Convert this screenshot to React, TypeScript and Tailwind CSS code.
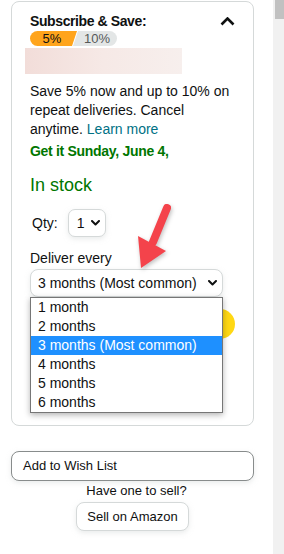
import { useState } from 'react';

const FREQS = ['1 month', '2 months', '3 months (Most common)', '4 months', '5 months', '6 months'];

function Chevron({ className = '' }: { className?: string }) {
  return (
    <svg width="9" height="6" viewBox="0 0 9 6" className={className}>
      <path d="M1 1 L4.5 4.5 L8 1" fill="none" stroke="#0f1111" strokeWidth="2" strokeLinecap="round" strokeLinejoin="round" />
    </svg>
  );
}

export default function App() {
  const [freq] = useState(2);

  return (
    <div className="flex w-[284px] h-[554px] bg-white overflow-hidden font-['Liberation_Sans',Arial,sans-serif] text-[#0f1111]">
      <div className="relative w-[273px] pl-[11px] pr-[19px]">
        {/* Subscribe card */}
        <div className="mt-px rounded-lg border border-[#d5d9d9] pt-[10px] px-[18px] pb-[18px]">
          <div className="flex items-center justify-between">
            <h3 className="text-[14px] font-bold leading-[19px] tracking-[-0.4px]">Subscribe &amp; Save:</h3>
            <svg width="15" height="9" viewBox="0 0 15 9">
              <path d="M1.5 7.5 L7.5 1.5 L13.5 7.5" fill="none" stroke="#0f1111" strokeWidth="2.6" />
            </svg>
          </div>

          <div className="flex h-[15px] w-[87px] rounded-full overflow-hidden text-[13px] leading-[15px]">
            <div className="w-[47px] bg-[#ffa41c] pr-[3px] text-center [clip-path:polygon(0_0,100%_0,calc(100%_-_5px)_100%,0_100%)]">5%</div>
            <div className="-ml-[4px] flex-1 bg-[#e3e6e6] pl-[4px] text-center text-[#565959] [clip-path:polygon(5px_0,100%_0,100%_100%,0_100%)]">10%</div>
          </div>

          <div className="mt-[2px] -ml-[5px] w-[157px] h-[26px] bg-linear-to-r from-[#f2ddd9] via-[#f6e9e6] to-[#f7efed]" />

          <p className="mt-[8px] text-[14px] leading-[19px]">
            Save 5% now and up to 10% on repeat deliveries. Cancel anytime. <span className="text-[#007185]">Learn more</span>
          </p>
          <p className="mt-[3px] text-[14px] leading-[19px] font-bold text-[#007600] tracking-[-0.3px]">Get it Sunday, June 4,</p>

          <p className="mt-[12px] text-[18px] leading-[24px] text-[#007600]">In stock</p>

          <div className="mt-[12px] flex items-center pl-[2px] text-[14px] leading-[19px]">
            <span>Qty:</span>
            <div className="ml-[10px] flex h-[28px] w-[38px] items-center justify-between rounded-[7px] border border-[#d5d9d9] bg-white pl-[8px] pr-[5px] shadow-[0_2px_5px_rgba(213,217,217,0.5)]">
              <span>1</span>
              <Chevron />
            </div>
          </div>

          <p className="mt-[12px] text-[14px] leading-[19px]">Deliver every</p>

          <div className="relative mt-px w-[193px]">
            <div className="flex h-[28px] items-center justify-between rounded-lg border border-[#d5d9d9] bg-white pl-[7px] pr-[5px] text-[14px] shadow-[0_2px_5px_rgba(213,217,217,0.5)]">
              <span>{FREQS[freq]}</span>
              <Chevron />
            </div>
            {/* Open option list */}
            <ul className="absolute left-0 top-full z-10 w-[193px] border border-[#767676] bg-white text-[14px] leading-[19px] shadow-[0_2px_6px_rgba(0,0,0,0.3)]">
              {FREQS.map((f, i) => (
                <li key={f} className={`h-[19px] px-[7px] ${i === freq ? 'bg-[#1e90ff] text-white' : ''}`}>
                  {f}
                </li>
              ))}
            </ul>
          </div>

          <button className="mt-[12px] mb-[68px] flex h-[30px] w-full items-center justify-center rounded-full bg-[#ffd814] text-[13px]">
            Subscribe Now
          </button>
        </div>

        <button className="mt-[25px] flex h-[30px] w-full items-center rounded-lg border border-[#888c8c] bg-white px-[11px] text-[13px] shadow-[0_2px_5px_rgba(213,217,217,0.5)]">
          Add to Wish List
        </button>

        <div className="mt-[2px] flex flex-col items-center">
          <p className="text-[13px] leading-[16px] pl-[8px]">Have one to sell?</p>
          <button className="mt-[3px] h-[29px] rounded-lg border border-[#d5d9d9] bg-white px-[10px] text-[13px] shadow-[0_2px_5px_rgba(213,217,217,0.5)]">
            Sell on Amazon
          </button>
        </div>

        {/* Annotation arrow */}
        <svg
          className="pointer-events-none absolute left-[130px] top-[200px] drop-shadow-[1px_2px_2px_rgba(0,0,0,0.25)]"
          width="45"
          height="75"
          viewBox="130 200 45 75"
        >
          <line x1="167" y1="208" x2="153" y2="242" stroke="#f4434b" strokeWidth="8" strokeLinecap="round" />
          <polygon points="138,236 166,251 141,268" fill="#f4434b" />
        </svg>
      </div>

      {/* Scrollbar */}
      <div className="h-full w-[11px] bg-[#f1f1f1] pl-[2px]">
        <div className="h-[19px] w-[9px] bg-[#c1c1c1]" />
      </div>
    </div>
  );
}
